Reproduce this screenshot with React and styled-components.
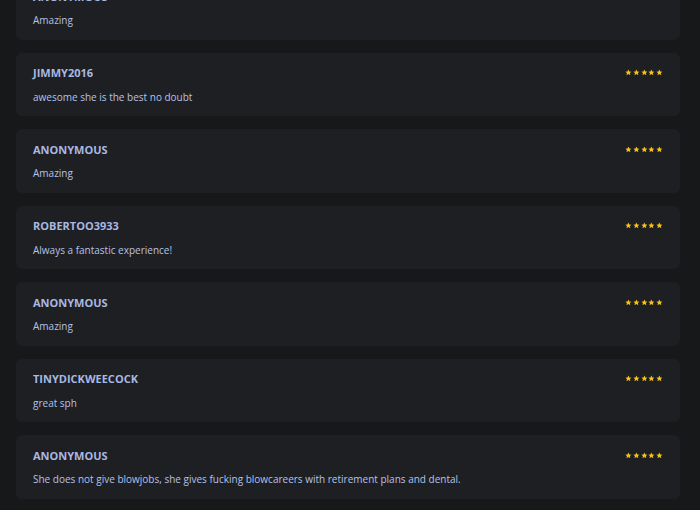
// Libraries.
import styled, { createGlobalStyle } from "styled-components";

// Styles.
const GlobalStyle = createGlobalStyle`
 html,
 body {
  margin: 0;
  padding: 0;
  background-color: #17181a;
  overflow: hidden;
 }

 * {
  box-sizing: border-box;
 }
`;

const StyledReviews = styled.ul`
 list-style: none;
 margin: -24px 0 0;
 padding: 0 20px 0 16px;
 display: flex;
 flex-direction: column;
 gap: 13px;
 font-family: "Open Sans", "Liberation Sans", sans-serif;
`;

const StyledCard = styled.li`
 background-color: #1e1f22;
 border-radius: 6px;
 padding: 14px 17px 13px;
 height: 63.5px;

 & .head {
  display: flex;
  align-items: center;
  justify-content: space-between;
  height: 12px;
  margin-bottom: 12px;
 }

 & .name {
  font-size: 11px;
  font-weight: 700;
  text-transform: uppercase;
  color: #a8b8e2;
 }

 & .text {
  margin: 0;
  font-size: 10px;
  line-height: 12px;
  color: #b5c2e8;
 }
`;

const StyledStars = styled.span`
 display: flex;
 align-items: center;
 gap: 0.8px;
 margin-right: 0.5px;

 & svg {
  width: 6.8px;
  height: 6.8px;
  fill: #f6c21a;
 }
`;

const reviews = [
 { name: "Anonymous", text: "Amazing" },
 { name: "Jimmy2016", text: "awesome she is the best no doubt" },
 { name: "Anonymous", text: "Amazing" },
 { name: "Robertoo3933", text: "Always a fantastic experience!" },
 { name: "Anonymous", text: "Amazing" },
 { name: "Tinydickweecock", text: "great sph" },
 {
  name: "Anonymous",
  text: "She does not give blowjobs, she gives fucking blowcareers with retirement plans and dental.",
 },
];

function Stars({ count = 5 }) {
 return (
  <StyledStars>
   {Array.from({ length: count }, (_, i) => (
    <svg key={i} viewBox="0 0 24 24">
     <path d="M12 1.5l3.2 7 7.6.8-5.7 5.1 1.6 7.5L12 18l-6.7 3.9 1.6-7.5L1.2 9.3l7.6-.8z" />
    </svg>
   ))}
  </StyledStars>
 );
}

export default function App() {
 return (
  <>
   <GlobalStyle />
   <StyledReviews>
    {reviews.map((review, i) => (
     <StyledCard key={i}>
      <div className="head">
       <span className="name">{review.name}</span>
       <Stars />
      </div>
      <p className="text">{review.text}</p>
     </StyledCard>
    ))}
   </StyledReviews>
  </>
 );
}
